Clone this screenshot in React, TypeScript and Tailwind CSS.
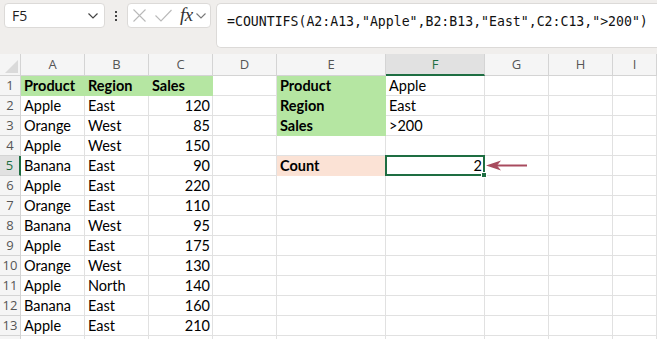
import React from "react";

type Cell = { t?: string; b?: boolean; r?: boolean; fill?: "g" | "p"; sel?: boolean; arrow?: boolean };

const colLetters = ["A", "B", "C", "D", "E", "F", "G", "H", "I"];

const data: Record<number, Record<string, Cell>> = {
  1: { A: { t: "Product", b: true, fill: "g" }, B: { t: "Region", b: true, fill: "g" }, C: { t: "Sales", b: true, fill: "g" }, E: { t: "Product", b: true, fill: "g" }, F: { t: "Apple" } },
  2: { A: { t: "Apple" }, B: { t: "East" }, C: { t: "120", r: true }, E: { t: "Region", b: true, fill: "g" }, F: { t: "East" } },
  3: { A: { t: "Orange" }, B: { t: "West" }, C: { t: "85", r: true }, E: { t: "Sales", b: true, fill: "g" }, F: { t: ">200" } },
  4: { A: { t: "Apple" }, B: { t: "West" }, C: { t: "150", r: true } },
  5: { A: { t: "Banana" }, B: { t: "East" }, C: { t: "90", r: true }, E: { t: "Count", b: true, fill: "p" }, F: { t: "2", r: true, sel: true }, G: { arrow: true } },
  6: { A: { t: "Apple" }, B: { t: "East" }, C: { t: "220", r: true } },
  7: { A: { t: "Orange" }, B: { t: "East" }, C: { t: "110", r: true } },
  8: { A: { t: "Banana" }, B: { t: "West" }, C: { t: "95", r: true } },
  9: { A: { t: "Apple" }, B: { t: "East" }, C: { t: "175", r: true } },
  10: { A: { t: "Orange" }, B: { t: "West" }, C: { t: "130", r: true } },
  11: { A: { t: "Apple" }, B: { t: "North" }, C: { t: "140", r: true } },
  12: { A: { t: "Banana" }, B: { t: "East" }, C: { t: "160", r: true } },
  13: { A: { t: "Apple" }, B: { t: "East" }, C: { t: "210", r: true } },
  14: {},
};

function GridCell({ c }: { c: Cell }) {
  const fillCls =
    c.fill === "g"
      ? "bg-[#b5e6a2] border-[#b5e6a2]"
      : c.fill === "p"
      ? "bg-[#fbe2d5] border-[#fbe2d5]"
      : "bg-white border-[#e1e1e1]";
  return (
    <div
      className={`relative ${c.sel ? "z-10" : ""} h-5 border-r border-b ${fillCls} flex items-center ${c.r ? "justify-end pr-[2px]" : "justify-start pl-[3px]"} overflow-visible`}
    >
      {c.t && (
        <span className={`text-[14.5px] leading-none pt-[2px] text-black whitespace-nowrap ${c.b ? "font-bold" : ""}`}>
          {c.t}
        </span>
      )}
      {c.sel && (
        <>
          <div className="pointer-events-none absolute -left-[1px] -top-[1px] -right-[1px] -bottom-[1px] border-2 border-[#1e6e42]" />
          <div className="pointer-events-none absolute -right-[3px] -bottom-[3px] w-[6px] h-[6px] bg-[#1e6e42] border border-white" />
        </>
      )}
      {c.arrow && (
        <svg className="absolute left-[1px] top-[4px]" width="42" height="11" viewBox="0 0 42 11">
          <path d="M0 5.5 L15 0.5 L11 5.5 L15 10.5 Z" fill="#a84b5e" />
          <line x1="11" y1="5.5" x2="41" y2="5.5" stroke="#a84b5e" strokeWidth="2" />
        </svg>
      )}
    </div>
  );
}

export default function App() {
  const rows = Array.from({ length: 14 }, (_, i) => i + 1);
  return (
    <div className="w-[657px] h-[339px] overflow-hidden bg-white [font-family:Lato,'Noto_Sans',sans-serif]">
      {/* Toolbar */}
      <div className="h-[54px] bg-[#f0eeec] flex items-start pt-[3px]">
        <div className="ml-[4px] w-[101px] h-[25px] bg-white border border-[#dcdad8] rounded-[4px] flex items-center justify-between pl-[7px] pr-[6px]">
          <span className="text-[14px] text-[#1f1f1f] [font-family:'Open_Sans',sans-serif]">F5</span>
          <svg width="10" height="6" viewBox="0 0 10 6">
            <path d="M0.5 0.5 L5 5 L9.5 0.5" fill="none" stroke="#444" strokeWidth="1.2" />
          </svg>
        </div>
        <div className="w-[22px] h-[25px] flex flex-col items-center justify-center gap-[2px]">
          <div className="w-[2px] h-[2px] bg-[#444]" />
          <div className="w-[2px] h-[2px] bg-[#444]" />
          <div className="w-[2px] h-[2px] bg-[#444]" />
        </div>
        <div className="w-[84px] h-[25px] bg-white border border-[#dcdad8] rounded-[4px] flex items-center pl-[5px]">
          <svg width="13" height="13" viewBox="0 0 13 13">
            <path d="M0.5 0.5 L12.5 12.5 M12.5 0.5 L0.5 12.5" stroke="#b9b9b9" strokeWidth="1.1" fill="none" />
          </svg>
          <svg width="17" height="13" viewBox="0 0 17 13" className="ml-[9px]">
            <path d="M0.5 6.5 L6 12 L16.5 1" stroke="#b9b9b9" strokeWidth="1.1" fill="none" />
          </svg>
          <span className="ml-[8px] italic text-[19px] leading-none text-[#333] [font-family:'Liberation_Serif',serif] tracking-[-0.5px] -mt-[2px]">fx</span>
          <svg width="10" height="6" viewBox="0 0 10 6" className="ml-[3px]">
            <path d="M0.5 0.5 L5 5 L9.5 0.5" fill="none" stroke="#777" strokeWidth="1.1" />
          </svg>
        </div>
        <div className="ml-[5px] flex-1 h-[45px] bg-white border border-r-0 border-[#dcdad8] rounded-l-[5px] pl-[10px] pt-[4px]">
          <span className="text-[13.2px] text-[#111] whitespace-nowrap [font-family:'DejaVu_Sans_Mono',monospace]">
            =COUNTIFS(A2:A13,"Apple",B2:B13,"East",C2:C13,"&gt;200")
          </span>
        </div>
      </div>

      {/* Grid */}
      <div className="grid grid-cols-[21px_64px_64px_64px_64px_109px_99px_64px_64px_1fr]">
        <div className="relative h-[22px] bg-[#f5f5f5] border-r border-b border-[#d4d4d4]">
          <svg className="absolute right-[2px] bottom-[2px]" width="13" height="13" viewBox="0 0 13 13">
            <path d="M13 0 L13 13 L0 13 Z" fill="#dadada" />
          </svg>
        </div>
        {colLetters.map((l) => (
          <div
            key={l}
            className={`h-[22px] flex items-center justify-center text-[13px] pt-[1px] ${
              l === "F"
                ? "bg-[#e1e1e1] text-[#1e6e42] border-r border-[#d4d4d4] border-b-2 border-b-[#1e6e42]"
                : "bg-[#f5f5f5] text-[#555] border-r border-b border-[#d4d4d4]"
            } [font-family:'Open_Sans',sans-serif]`}
          >
            {l}
          </div>
        ))}
        {rows.map((r) => (
          <React.Fragment key={r}>
            <div
              className={`h-5 flex items-center justify-center text-[13px] [font-family:'Open_Sans',sans-serif] ${
                r === 5
                  ? "bg-[#e1e1e1] text-[#1e6e42] border-b border-[#d4d4d4] border-r-2 border-r-[#1e6e42]"
                  : "bg-[#f5f5f5] text-[#555] border-r border-b border-[#d4d4d4]"
              }`}
            >
              {r <= 13 ? r : ""}
            </div>
            {colLetters.map((l) => (
              <GridCell key={l} c={data[r][l] || {}} />
            ))}
          </React.Fragment>
        ))}
      </div>
    </div>
  );
}
